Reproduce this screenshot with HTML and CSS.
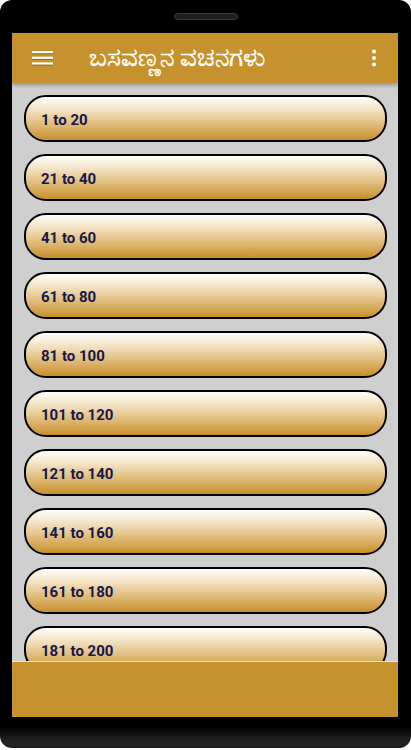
FILE: index.html
```html
<!DOCTYPE html>
<html lang="kn">
<head>
  <meta charset="UTF-8">
  <title>ಬಸವಣ್ಣನ ವಚನಗಳು</title>
  <link rel="stylesheet" href="styles.css">
</head>
<body>

<div class="phone">
  <div class="speaker"></div>

  <div class="screen">
    <header class="appbar">
      <span class="menu">
        <svg width="22" height="14" viewBox="0 0 22 14">
          <rect x="0" y="0" width="21" height="2.2" fill="#fff"/>
          <rect x="0" y="5.7" width="21" height="2.2" fill="#fff"/>
          <rect x="0" y="11.4" width="21" height="2.2" fill="#fff"/>
        </svg>
      </span>
      <h1 class="title">ಬಸವಣ್ಣನ ವಚನಗಳು</h1>
      <span class="more">
        <svg width="6" height="18" viewBox="0 0 6 18">
          <circle cx="3" cy="2.5" r="2.1" fill="#fff"/>
          <circle cx="3" cy="9" r="2.1" fill="#fff"/>
          <circle cx="3" cy="15.5" r="2.1" fill="#fff"/>
        </svg>
      </span>
    </header>

    <div class="list">
      <button class="item">1 to 20</button>
      <button class="item">21 to 40</button>
      <button class="item">41 to 60</button>
      <button class="item">61 to 80</button>
      <button class="item">81 to 100</button>
      <button class="item">101 to 120</button>
      <button class="item">121 to 140</button>
      <button class="item">141 to 160</button>
      <button class="item">161 to 180</button>
      <button class="item">181 to 200</button>
    </div>

    <footer class="bottombar"></footer>
  </div>
</div>

</body>
</html>
```

FILE: styles.css
```css
body {
  margin: 0;
  background: #ffffff;
  font-family: Roboto, 'Noto Sans', sans-serif;
}
.phone {
  width: 411px;
  height: 748px;
  box-sizing: border-box;
  padding-top: 13px;
  background: linear-gradient(to bottom, #000 0, #000 727px, #1c1c1c 738px, #242424 744px, #1a1a1a 748px);
  border-radius: 12px;
  overflow: hidden;
}
.speaker {
  width: 64px;
  height: 7px;
  margin: 0 auto 13px;
  box-sizing: border-box;
  background: #1e1e1e;
  border: 1px solid #3a3a3a;
  border-radius: 4px;
}
.screen {
  margin-left: 12px;
  width: 386px;
  height: 684px;
  display: flex;
  flex-direction: column;
  background: #cfcfcf;
  overflow: hidden;
}
.appbar {
  height: 50px;
  flex-shrink: 0;
  display: flex;
  align-items: center;
  background: #c6922e;
  box-shadow: 0 2px 4px rgba(0, 0, 0, 0.3);
  position: relative;
  z-index: 1;
}
.menu {
  display: flex;
  margin-left: 20px;
  filter: drop-shadow(0 1px 0 rgba(0, 0, 0, 0.25));
}
.title {
  margin: 0 0 2px 35px;
  flex: 1;
  color: #fff;
  font-size: 26px;
  font-weight: normal;
  line-height: 1;
  -webkit-text-stroke: 0.5px #fff;
}
.more {
  display: flex;
  margin-right: 21px;
}
.list {
  flex: 1;
  min-height: 0;
  overflow: hidden;
  display: flex;
  flex-direction: column;
  gap: 12px;
  padding: 12px 11px 0 12px;
}
.item {
  flex-shrink: 0;
  height: 47px;
  display: flex;
  align-items: center;
  padding: 3px 0 0 15px;
  background: linear-gradient(to bottom, #fffefa 0%, #f3e2c4 30%, #dfba76 65%, #c78f2c 100%);
  border: 2px solid #000;
  border-radius: 22px;
  color: #17174a;
  font-family: Roboto, 'Noto Sans', sans-serif;
  font-size: 15px;
  font-weight: bold;
  text-align: left;
  cursor: pointer;
}
.bottombar {
  height: 55px;
  flex-shrink: 0;
  background: #c6922e;
  border-top: 1px solid #e6e6e6;
  position: relative;
  z-index: 1;
}
```
